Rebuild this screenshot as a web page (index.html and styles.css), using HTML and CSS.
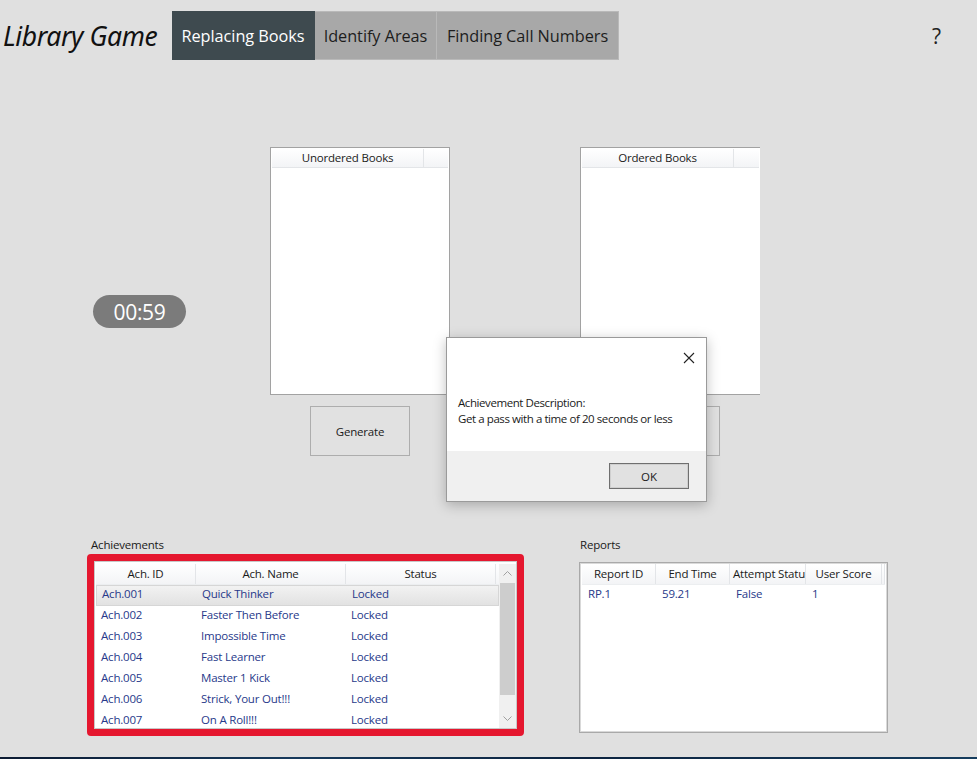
FILE: index.html
```html
<!DOCTYPE html>
<html>
<head>
<meta charset="utf-8">
<link rel="stylesheet" href="styles.css">
</head>
<body>
<div class="app">
  <header class="topbar">
    <h1 class="title">Library Game</h1>
    <nav class="tabs">
      <div class="tab active">Replacing Books</div>
      <div class="tab">Identify Areas</div>
      <div class="tab">Finding Call Numbers</div>
    </nav>
    <div class="help">?</div>
  </header>

  <section class="game">
    <div class="timer-col"><div class="timer">00:59</div></div>
    <div class="book-col">
      <div class="listbox">
        <div class="lb-head"><div class="lb-col">Unordered Books</div><div class="lb-rest"></div></div>
      </div>
      <div class="btn">Generate</div>
    </div>
    <div class="book-col second">
      <div class="listbox open-right">
        <div class="lb-head"><div class="lb-col">Ordered Books</div><div class="lb-rest"></div></div>
      </div>
      <div class="btn"></div>
    </div>
  </section>

  <section class="bottom">
    <div class="ach">
      <div class="label">Achievements</div>
      <div class="redbox">
        <div class="grid-list">
          <div class="gl-main">
            <div class="gl-head ach-cols"><div>Ach. ID</div><div>Ach. Name</div><div>Status</div></div>
            <div class="gl-row ach-cols selected"><div>Ach.001</div><div>Quick Thinker</div><div>Locked</div></div>
            <div class="gl-row ach-cols"><div>Ach.002</div><div>Faster Then Before</div><div>Locked</div></div>
            <div class="gl-row ach-cols"><div>Ach.003</div><div>Impossible Time</div><div>Locked</div></div>
            <div class="gl-row ach-cols"><div>Ach.004</div><div>Fast Learner</div><div>Locked</div></div>
            <div class="gl-row ach-cols"><div>Ach.005</div><div>Master 1 Kick</div><div>Locked</div></div>
            <div class="gl-row ach-cols"><div>Ach.006</div><div>Strick, Your Out!!!</div><div>Locked</div></div>
            <div class="gl-row ach-cols"><div>Ach.007</div><div>On A Roll!!!</div><div>Locked</div></div>
          </div>
          <div class="scrollbar">
            <div class="sb-arrow">
              <svg width="9" height="5" viewBox="0 0 9 5"><path d="M0.5 4.5 L4.5 0.5 L8.5 4.5" fill="none" stroke="#a0a0a0" stroke-width="1"/></svg>
            </div>
            <div class="sb-thumb"></div>
            <div class="sb-track"></div>
            <div class="sb-arrow">
              <svg width="9" height="5" viewBox="0 0 9 5"><path d="M0.5 0.5 L4.5 4.5 L8.5 0.5" fill="none" stroke="#a0a0a0" stroke-width="1"/></svg>
            </div>
          </div>
        </div>
      </div>
    </div>
    <div class="rep">
      <div class="label">Reports</div>
      <div class="replist">
        <div class="gl-head rep-cols"><div>Report ID</div><div>End Time</div><div class="clip">Attempt Status</div><div>User Score</div><div></div></div>
        <div class="gl-row rep-cols"><div>RP.1</div><div>59.21</div><div>False</div><div>1</div><div></div></div>
      </div>
    </div>
  </section>

  <div class="dialog">
    <div class="dlg-body">
      <div class="dlg-close">
        <svg width="12" height="12" viewBox="0 0 12 12"><path d="M1 1 L11 11 M11 1 L1 11" stroke="#222" stroke-width="1.1" fill="none"/></svg>
      </div>
      <div class="dlg-text">Achievement Description:<br>Get a pass with a time of 20 seconds or less</div>
    </div>
    <div class="dlg-foot"><div class="ok">OK</div></div>
  </div>

  <div class="strip"></div>
</div>
</body>
</html>
```

FILE: styles.css
```css
* { box-sizing: border-box; }
html, body { margin: 0; padding: 0; }
body {
  background: #e0e0e0;
  font-family: "Open Sans", "Noto Sans", sans-serif;
  color: #1a1a1a;
  width: 977px;
  height: 759px;
  overflow: hidden;
}
.app { position: relative; width: 977px; height: 759px; }

.topbar {
  display: flex;
  align-items: center;
  padding-top: 11px;
  height: 60px;
}
.title {
  margin: 0 0 0 3px;
  width: 169px;
  font-family: "Noto Sans", "Open Sans", sans-serif;
  font-style: italic;
  font-weight: 400;
  font-size: 26.5px;
  letter-spacing: -0.4px;
  color: #111;
  white-space: nowrap;
}
.tabs { display: flex; height: 49px; }
.tab {
  display: flex;
  align-items: center;
  justify-content: center;
  background: #a8a8a8;
  color: #1d1d1d;
  font-size: 16.3px;
  letter-spacing: -0.05px;
  border: 1px solid #b9b9b9;
  border-left: none;
}
.tab:nth-child(1) { width: 143px; }
.tab:nth-child(2) { width: 122px; }
.tab:nth-child(3) { width: 182px; }
.tab.active { background: #3e4a4f; color: #fff; border-color: #3e4a4f; }
.help {
  margin-left: auto;
  margin-right: 36px;
  font-size: 21px;
  color: #222;
}

.game {
  display: flex;
  margin-top: 87px;
  padding-left: 93px;
}
.timer-col { width: 177px; }
.timer {
  margin-top: 148px;
  width: 93px;
  height: 33px;
  border-radius: 17px;
  background: #7b7b7b;
  color: #fff;
  font-size: 21px;
  display: flex;
  align-items: center;
  justify-content: center;
  letter-spacing: -0.3px;
}
.book-col { width: 180px; }
.book-col.second { margin-left: 130px; }
.listbox {
  height: 248px;
  background: #fff;
  border: 1px solid #a2a2a2;
  padding: 1px;
}
.listbox.open-right { border-right: none; }
.lb-head {
  display: flex;
  height: 19px;
  background: linear-gradient(#ffffff, #f3f4f6);
  border-bottom: 1px solid #e3e5e8;
  font-size: 11.5px;
  letter-spacing: -0.2px;
  color: #1a1a1a;
}
.lb-col {
  width: 152px;
  border-right: 1px solid #e3e5e8;
  text-align: center;
  line-height: 18px;
}
.lb-rest { flex: 1; }
.btn {
  margin: 11px 0 0 40px;
  width: 100px;
  height: 50px;
  background: #e1e1e1;
  border: 1px solid #adadad;
  display: flex;
  align-items: center;
  justify-content: center;
  font-size: 11.5px;
  letter-spacing: -0.2px;
}

.bottom {
  display: flex;
  margin-top: 81px;
  padding-left: 87px;
}
.label {
  font-size: 11.5px;
  letter-spacing: -0.2px;
  height: 16px;
  line-height: 16px;
  padding-left: 4px;
  color: #1a1a1a;
}
.ach { width: 437px; }
.redbox {
  margin-top: 1px;
  width: 437px;
  height: 182px;
  border: 7px solid #e5172f;
  border-radius: 4px;
  background: #fff;
}
.grid-list {
  display: flex;
  height: 100%;
  border: 1px solid #c8c8c8;
  padding: 2px 0 0 1px;
  overflow: hidden;
}
.gl-main { flex: 1; overflow: hidden; }
.gl-head {
  height: 21px;
  background: linear-gradient(#ffffff, #f3f4f6);
  border-bottom: 1px solid #eceef0;
  font-size: 11.5px;
  letter-spacing: -0.2px;
  color: #1a1a1a;
}
.gl-head > div {
  text-align: center;
  line-height: 20px;
  border-right: 1px solid #e3e5e8;
  white-space: nowrap;
  overflow: hidden;
}
.gl-row {
  height: 21px;
  font-size: 11.5px;
  letter-spacing: -0.2px;
  color: #27398a;
  line-height: 18px;
}
.gl-row > div { padding-left: 5px; white-space: nowrap; }
.ach-cols { display: grid; grid-template-columns: 100px 150px 150px 1fr; }
.gl-row.selected {
  background: linear-gradient(#f2f2f2, #e2e2e2);
  border: 1px solid #d6d6d6;
  line-height: 16px;
}
.scrollbar {
  width: 17px;
  display: flex;
  flex-direction: column;
  background: #f0f0f0;
}
.sb-arrow {
  height: 19px;
  display: flex;
  align-items: center;
  justify-content: center;
}
.sb-thumb { height: 112px; background: #cdcdcd; margin: 0 1px; }
.sb-track { flex: 1; }

.rep { margin-left: 55px; }
.rep .label { padding-left: 1px; }
.replist {
  margin-top: 9px;
  width: 309px;
  height: 171px;
  background: #fff;
  border: 1px solid #a9a9a9;
  box-shadow: inset 0 0 0 1px #d9d9d9;
  padding: 1px 2px;
}
.rep-cols { display: grid; grid-template-columns: 74px 74px 76px 76px 1fr; }
.gl-head > .clip { text-align: left; padding-left: 3px; text-overflow: clip; }
.rep-cols.gl-row > div { padding-left: 6px; }

.dialog {
  position: absolute;
  left: 446px;
  top: 337px;
  width: 261px;
  height: 165px;
  background: #fff;
  border: 1px solid #9a9a9a;
  box-shadow: 0 3px 12px rgba(0,0,0,0.25);
  display: flex;
  flex-direction: column;
}
.dlg-body { flex: 1; position: relative; padding: 57px 0 0 11px; }
.dlg-close { position: absolute; right: 11px; top: 9px; }
.dlg-text {
  font-size: 11.5px;
  letter-spacing: -0.42px;
  line-height: 16px;
  color: #1a1a1a;
}
.dlg-foot {
  height: 50px;
  background: #f0f0f0;
  display: flex;
  justify-content: flex-end;
  align-items: flex-start;
  padding: 12px 17px 0 0;
}
.ok {
  width: 80px;
  height: 26px;
  background: #e1e1e1;
  border: 1px solid #6f6f6f;
  box-shadow: inset 0 0 0 1px #cfcfcf;
  display: flex;
  align-items: center;
  justify-content: center;
  font-size: 11.5px;
}

.strip {
  position: absolute;
  left: 0;
  bottom: 0;
  width: 977px;
  height: 2px;
  background: linear-gradient(90deg, #0c1b33, #173a5c 30%, #0d2440 60%, #163d5e);
}
```
